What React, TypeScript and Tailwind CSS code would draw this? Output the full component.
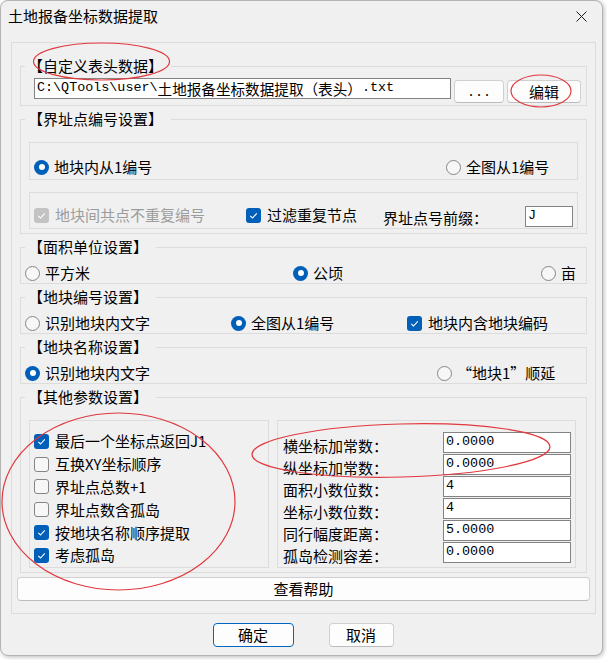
import React from "react";

const CJK = "font-['Noto_Sans_CJK_SC',sans-serif]";
const MONO = "font-['Liberation_Mono','Noto_Sans_CJK_SC',monospace]";

function Radio({ checked, label, className = "" }: { checked?: boolean; label: string; className?: string }) {
  return (
    <div className={`flex items-center h-[18px] shrink-0 ${className}`}>
      {checked ? (
        <span className="w-[15px] h-[15px] shrink-0 rounded-full bg-[#005fb8] flex items-center justify-center">
          <span className="w-[6px] h-[6px] rounded-full bg-white" />
        </span>
      ) : (
        <span className="w-[15px] h-[15px] shrink-0 rounded-full border border-[#858585] bg-[#f7f7f7]" />
      )}
      <span className="ml-[5px] text-[15px] leading-[18px] whitespace-nowrap">{label}</span>
    </div>
  );
}

function Check({
  checked,
  disabled,
  label,
  className = "",
}: {
  checked?: boolean;
  disabled?: boolean;
  label: string;
  className?: string;
}) {
  const box = disabled
    ? "bg-[#c3c3c3]"
    : checked
    ? "bg-[#005fb8]"
    : "border border-[#858585] bg-[#f7f7f7]";
  return (
    <div className={`flex items-center h-[18px] shrink-0 ${className}`}>
      <span className={`w-[15px] h-[15px] shrink-0 rounded-[3px] flex items-center justify-center ${box}`}>
        {checked && (
          <svg width="11" height="11" viewBox="0 0 11 11">
            <path d="M2.3 5.9 L4.5 8 L8.8 3.3" stroke="white" strokeWidth="1.1" fill="none" />
          </svg>
        )}
      </span>
      <span className={`ml-[6px] text-[15px] leading-[18px] whitespace-nowrap ${disabled ? "text-[#9c9c9c]" : ""}`}>
        {label}
      </span>
    </div>
  );
}

function Group({ title, className = "", children }: { title: string; className?: string; children: React.ReactNode }) {
  return (
    <fieldset className={`mx-[8px] border border-[#dcdcdc] ${className}`}>
      <legend className="ml-[4px] pl-[3px] pr-[8px] text-[15px] leading-[20px]">{title}</legend>
      {children}
    </fieldset>
  );
}

function Btn({ children, className = "" }: { children: React.ReactNode; className?: string }) {
  return (
    <div
      className={`flex items-center justify-center rounded-[4px] border border-[#d0d0d0] border-b-[#bdbdbd] bg-[#fdfdfd] text-[15px] leading-[18px] ${className}`}
    >
      {children}
    </div>
  );
}

const params: [string, string][] = [
  ["横坐标加常数：", "0.0000"],
  ["纵坐标加常数：", "0.0000"],
  ["面积小数位数：", "4"],
  ["坐标小数位数：", "4"],
  ["同行幅度距离：", "5.0000"],
  ["孤岛检测容差：", "0.0000"],
];

const opts: [string, boolean][] = [
  ["最后一个坐标点返回J1", true],
  ["互换XY坐标顺序", false],
  ["界址点总数+1", false],
  ["界址点数含孤岛", false],
  ["按地块名称顺序提取", true],
  ["考虑孤岛", true],
];

export default function App() {
  return (
    <div className={`relative w-[607px] h-[660px] bg-white overflow-hidden text-black ${CJK}`}>
      <div className="w-[603px] h-[656px] bg-[#f0f0f0] border border-[#b4b4b4] rounded-[8px] shadow-[1px_1px_4px_rgba(0,0,0,0.28)] flex flex-col">
        {/* title bar */}
        <div className="h-[30px] flex items-center justify-between pl-[7px] pr-[15px]">
          <span className="text-[15px] leading-[20px]">土地报备坐标数据提取</span>
          <svg width="11" height="11" viewBox="0 0 11 11">
            <path d="M0.5 0.5 L10.5 10.5 M10.5 0.5 L0.5 10.5" stroke="#1b1b1b" strokeWidth="1" />
          </svg>
        </div>

        {/* outer frame */}
        <div className="ml-[10px] mt-[11px] w-[585px] h-[572px] border border-[#dcdcdc] flex flex-col pb-[12px]">
          {/* 自定义表头数据 */}
          <Group title="【自定义表头数据】" className="mt-[13px] pb-[2px]">
            <div className="flex items-start pl-[13px] mt-[2px]">
              <div className="w-[417px] h-[21px] border border-[#838383] bg-white flex items-center pl-[2px] whitespace-nowrap overflow-hidden">
                <span className={`${MONO} text-[13.4px]`}>{"C:\\QTools\\user\\"}</span>
                <span className="text-[14.6px]">土地报备坐标数据提取（表头）</span>
                <span className={`${MONO} text-[13.4px]`}>.txt</span>
              </div>
              <Btn className="ml-[3px] mt-[2px] w-[50px] h-[23px]">
                <span className={`${MONO} text-[13.4px] pt-[2px]`}>...</span>
              </Btn>
              <Btn className="ml-[3px] mt-[2px] w-[74px] h-[23px]">编辑</Btn>
            </div>
          </Group>

          {/* 界址点编号设置 */}
          <Group title="【界址点编号设置】" className="mt-[3px] pb-[4px]">
            <div className="mx-[8px] mt-[13px] h-[38px] border border-[#dcdcdc] pt-[15px] pl-[4px] flex">
              <Radio checked label="地块内从1编号" className="w-[412px]" />
              <Radio label="全图从1编号" />
            </div>
            <div className="mx-[8px] mt-[12px] h-[37px] border border-[#dcdcdc] pt-[13px] pl-[4px] flex items-start">
              <Check checked disabled label="地块间共点不重复编号" className="w-[212px]" />
              <Check checked label="过滤重复节点" className="w-[137px]" />
              <span className="w-[142px] mt-[3px] text-[15px] leading-[18px] whitespace-nowrap">界址点号前缀：</span>
              <div className="w-[48px] h-[21px] border border-[#838383] bg-white flex items-center pl-[2px]">
                <span className={`${MONO} text-[13.4px]`}>J</span>
              </div>
            </div>
          </Group>

          {/* 面积单位设置 */}
          <Group title="【面积单位设置】" className="mt-[3px] pb-[1px]">
            <div className="flex mt-[7px] pl-[4px]">
              <Radio label="平方米" className="w-[268px]" />
              <Radio checked label="公顷" className="w-[248px]" />
              <Radio label="亩" />
            </div>
          </Group>

          {/* 地块编号设置 */}
          <Group title="【地块编号设置】" className="mt-[3px] pb-[1px]">
            <div className="flex mt-[7px] pl-[4px]">
              <Radio label="识别地块内文字" className="w-[206px]" />
              <Radio checked label="全图从1编号" className="w-[176px]" />
              <Check checked label="地块内含地块编码" />
            </div>
          </Group>

          {/* 地块名称设置 */}
          <Group title="【地块名称设置】" className="mt-[3px] pb-[1px]">
            <div className="flex mt-[7px] pl-[4px]">
              <Radio checked label="识别地块内文字" className="w-[412px]" />
              <Radio label="“地块1”顺延" />
            </div>
          </Group>

          {/* 其他参数设置 */}
          <Group title="【其他参数设置】" className="mt-[3px] pb-[4px]">
            <div className="flex gap-[8px] ml-[8px] mt-[13px]">
              <div className="w-[240px] h-[148px] border border-[#dcdcdc] pt-[9px] pl-[4px] flex flex-col">
                {opts.map(([l, c]) => (
                  <div key={l} className="h-[22.8px] flex items-center">
                    <Check checked={c} label={l} />
                  </div>
                ))}
              </div>
              <div className="w-[299px] h-[148px] border border-[#dcdcdc] pt-[11px] pl-[5px] flex flex-col">
                {params.map(([l, v]) => (
                  <div key={l} className="flex items-start h-[22px]">
                    <span className="w-[160px] mt-[3px] text-[15px] leading-[21px] whitespace-nowrap">{l}</span>
                    <div className="w-[128px] h-[21px] border border-[#838383] bg-white flex items-center pl-[2px]">
                      <span className={`${MONO} text-[13.4px]`}>{v}</span>
                    </div>
                  </div>
                ))}
              </div>
            </div>
          </Group>

          {/* help */}
          <Btn className="ml-[5px] mt-[4px] w-[573px] h-[24px]">查看帮助</Btn>
        </div>

        {/* bottom buttons */}
        <div className="flex justify-center gap-[35px] mt-[9px] pl-[3px]">
          <Btn className="w-[81px] h-[24px] !border-[#0067c0]">确定</Btn>
          <Btn className="w-[65px] h-[24px]">取消</Btn>
        </div>
      </div>

      {/* annotation ellipses */}
      <svg className="absolute left-0 top-0 pointer-events-none" width="607" height="660">
        <g fill="none" stroke="#e0393e" strokeWidth="1.2">
          <ellipse cx="101.5" cy="61.5" rx="68" ry="18.5" />
          <ellipse cx="541" cy="91" rx="30" ry="16" />
          <ellipse cx="401" cy="450.5" rx="149" ry="26.5" transform="rotate(-1.5 401 450.5)" />
          <ellipse cx="118.5" cy="501.5" rx="116.5" ry="88.5" />
        </g>
      </svg>
    </div>
  );
}
